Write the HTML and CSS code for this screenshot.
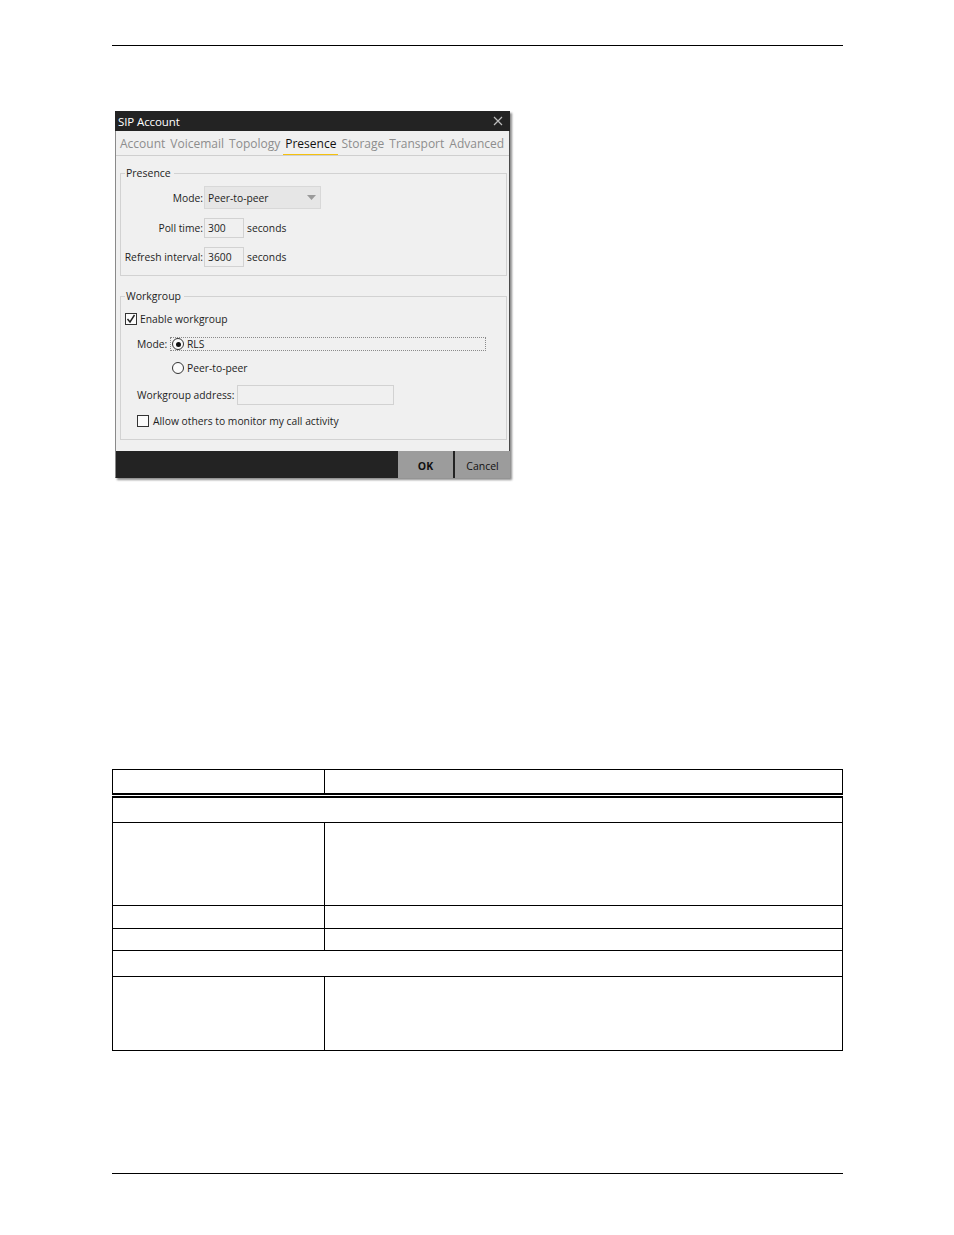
FILE: index.html
```
<!DOCTYPE html>
<html>
<head>
<meta charset="utf-8">
<link rel="stylesheet" href="styles.css">
</head>
<body>
<div class="page">
  <div class="rule rule-top"></div>

  <div class="dialog">
    <div class="titlebar">
      <span class="title">SIP Account</span>
      <svg class="close" width="10" height="10" viewBox="0 0 10 10"><path d="M1 1L9 9M9 1L1 9" stroke="#bdbdbd" stroke-width="1.2" fill="none"/></svg>
    </div>
    <div class="tabs">
      <span class="tab">Account</span>
      <span class="tab">Voicemail</span>
      <span class="tab">Topology</span>
      <span class="tab active">Presence</span>
      <span class="tab">Storage</span>
      <span class="tab">Transport</span>
      <span class="tab">Advanced</span>
    </div>
    <div class="content">
      <fieldset class="group presence">
        <legend>Presence</legend>
        <div class="form">
          <div class="row row-select">
            <span class="label">Mode:</span>
            <span class="select">Peer-to-peer<svg class="arrow" width="9" height="5" viewBox="0 0 9 5"><path d="M0 0H9L4.5 5Z" fill="#9a9a9a"/></svg></span>
          </div>
          <div class="row">
            <span class="label">Poll time:</span>
            <span class="input small">300</span>
            <span class="unit">seconds</span>
          </div>
          <div class="row">
            <span class="label">Refresh interval:</span>
            <span class="input small">3600</span>
            <span class="unit">seconds</span>
          </div>
        </div>
      </fieldset>

      <fieldset class="group workgroup">
        <legend>Workgroup</legend>
        <div class="wrow enable">
          <span class="checkbox"><svg width="10" height="10" viewBox="0 0 10 10"><path d="M1.5 5L4 8L8.5 1" stroke="#222" stroke-width="1.4" fill="none"/></svg></span>
          <span>Enable workgroup</span>
        </div>
        <div class="wrow mode indent">
          <span class="mode-label">Mode:</span>
          <div class="options">
            <div class="option focused"><span class="radio checked"></span><span>RLS</span></div>
            <div class="option second"><span class="radio"></span><span>Peer-to-peer</span></div>
          </div>
        </div>
        <div class="wrow address indent">
          <span>Workgroup address:</span>
          <span class="input wide"></span>
        </div>
        <div class="wrow allow indent">
          <span class="checkbox"></span>
          <span>Allow others to monitor my call activity</span>
        </div>
      </fieldset>
    </div>
    <div class="footer">
      <span class="btn ok">OK</span>
      <span class="btn cancel">Cancel</span>
    </div>
  </div>

  <table class="spec">
    <tr class="r-head"><td class="c1"></td><td></td></tr>
    <tr class="r24"><td colspan="2"></td></tr>
    <tr class="r83"><td class="c1"></td><td></td></tr>
    <tr class="r23"><td class="c1"></td><td></td></tr>
    <tr class="r22"><td class="c1"></td><td></td></tr>
    <tr class="r26"><td colspan="2"></td></tr>
    <tr class="r74"><td class="c1"></td><td></td></tr>
  </table>

  <div class="rule rule-bottom"></div>
</div>
</body>
</html>
```

FILE: styles.css
```
* { box-sizing: border-box; }
html, body { margin: 0; padding: 0; background: #fff; }
body { font-family: "Open Sans", "Noto Sans", sans-serif; }

.page {
  width: 954px;
  padding-left: 112px;
  padding-top: 45px;
}
.rule {
  width: 731px;
  border-top: 1px solid #000;
  height: 0;
}

/* dialog */
.dialog {
  margin-top: 65px;
  margin-left: 3px;
  width: 395px;
  height: 367px;
  background: #f0f0f0;
  border: 1px solid #4a4a4a;
  border-left-color: #8a8a8a;
  box-shadow: 2px 2px 2px rgba(0,0,0,0.45);
  display: flex;
  flex-direction: column;
  font-size: 10.3px;
  color: #1e1e1e;
  white-space: nowrap;
}
.titlebar {
  height: 20px;
  background: #232323;
  color: #fff;
  display: flex;
  align-items: center;
  justify-content: space-between;
  padding: 0 7px 0 3px;
  font-size: 11.5px;
  margin: -1px -1px 0 -1px;
}
.title { letter-spacing: -0.1px; }
.tabs {
  height: 25px;
  border-bottom: 1px solid #cfcfcf;
  display: flex;
  align-items: flex-start;
  padding: 0 0 0 4px;
  gap: 5px;
  font-size: 12px;
  color: #8d8d8d;
}
.tab { position: relative; height: 24px; line-height: 14px; padding-top: 6px; }
.tab.active { color: #111; }
.tab.active::after {
  content: "";
  position: absolute;
  left: -2px; right: -2px; bottom: 0;
  height: 1px;
  background: #f5c10e;
}

.content {
  flex: 1;
  padding: 10px 2px 0 4px;
  display: flex;
  flex-direction: column;
  gap: 13px;
}
.group {
  margin: 0;
  border: 1px solid #d2d2d2;
  padding: 0 4px;
  min-width: 0;
}
.group legend {
  padding: 0 3px 0 1px;
  margin-left: 0;
  font-size: 10.5px;
  line-height: 14px;
  color: #1e1e1e;
}
.presence { height: 110px; }
.workgroup { height: 151px; }

.form {
  display: flex;
  flex-direction: column;
  gap: 9px;
  padding-top: 6px;
}
.row {
  display: flex;
  align-items: center;
  height: 20px;
}
.row-select { height: 23px; }
.label {
  width: 79px;
  flex-shrink: 0;
  display: flex;
  justify-content: flex-end;
  padding-right: 1px;
}
.select {
  width: 117px;
  height: 23px;
  background: #e6e6e6;
  border: 1px solid #d8d8d8;
  display: flex;
  align-items: center;
  justify-content: space-between;
  padding: 0 4px 0 3px;
}
.input {
  height: 20px;
  background: #f0f0f0;
  border: 1px solid #d2d2d2;
  display: flex;
  align-items: center;
  padding-left: 3px;
}
.input.small { width: 40px; }
.input.wide { width: 157px; height: 20px; }
.unit { margin-left: 3px; }

.wrow {
  display: flex;
  align-items: center;
}
.indent { padding-left: 12px; }
.enable { margin-top: 8px; height: 16px; gap: 3px; }
.checkbox {
  width: 12px;
  height: 12px;
  border: 1px solid #333;
  background: #fbfbfb;
  display: flex;
  align-items: center;
  justify-content: center;
}
.mode { margin-top: 10px; align-items: flex-start; }
.mode-label { height: 14px; line-height: 14px; width: 33px; }
.options { display: flex; flex-direction: column; flex: 1; margin-right: 16px; }
.option {
  display: flex;
  align-items: center;
  gap: 3px;
  height: 14px;
  padding-left: 1px;
}
.option.focused { border: 1px dotted #8a8a8a; }
.option.second { margin-top: 10px; border: 1px solid transparent; height: 14px; }
.radio {
  width: 12px;
  height: 12px;
  border: 1px solid #333;
  border-radius: 50%;
  background: #fbfbfb;
  display: flex;
  align-items: center;
  justify-content: center;
}
.radio.checked::after {
  content: "";
  width: 5px;
  height: 5px;
  border-radius: 50%;
  background: #111;
}
.address { margin-top: 9px; height: 21px; gap: 3px; }
.allow { margin-top: 9px; height: 14px; gap: 4px; }

.footer {
  height: 27px;
  background: #232323;
  display: flex;
  justify-content: flex-end;
  gap: 2px;
  margin: 0 -1px -1px 0;
}
.btn {
  width: 55px;
  background: #9c9c9c;
  display: flex;
  align-items: center;
  justify-content: center;
  padding-top: 2px;
  font-size: 10.5px;
  color: #111;
}
.btn.ok { font-weight: bold; }

/* table */
.spec {
  margin-top: 291px;
  width: 731px;
  border-collapse: collapse;
}
.spec td {
  border: 1px solid #000;
  padding: 0;
}
.spec td.c1 { width: 212px; }
.r-head td { height: 26px; border-bottom: 5px double #000; }
.r24 td { height: 27px; }
.r83 td { height: 83px; }
.r23 td { height: 23px; }
.r22 td { height: 22px; }
.r26 td { height: 26px; }
.r74 td { height: 74px; }

.rule-bottom { margin-top: 122px; }
```
